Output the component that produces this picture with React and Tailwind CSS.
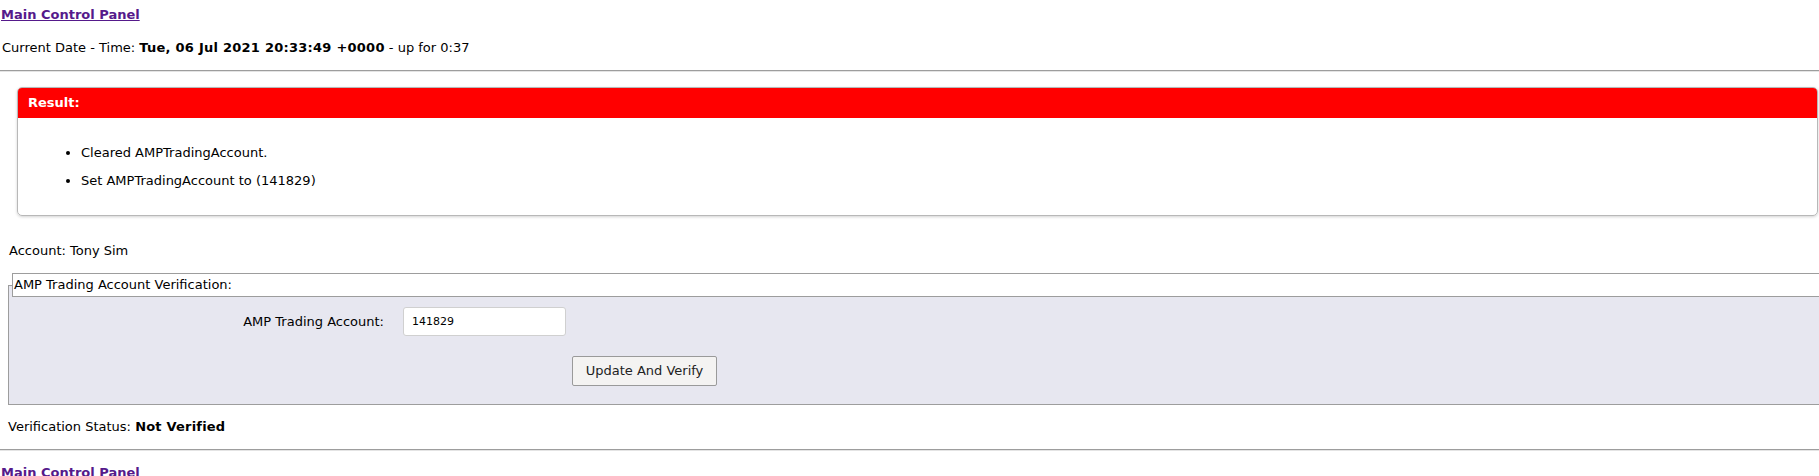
export default function App() {
    return (
        <div className="w-full overflow-hidden bg-white font-['DejaVu_Sans',sans-serif] text-[13px] leading-[16px] text-black">
            <div className="pt-[7px] pl-[1px]">
                <a href="#" className="font-bold text-[#551a8b] underline">Main Control Panel</a>
            </div>

            <div className="mt-[17px] pl-[2px]">
                Current Date - Time: <b className="tracking-[0.25px]">Tue, 06 Jul 2021 20:33:49 +0000</b> - up for 0:37
            </div>

            <div className="mt-[14px] border-t border-b border-t-[#9d9d9d] border-b-[#e4e4e4]" />

            <div className="mt-[15px] ml-[17px] mr-px rounded-[5px] border border-[#b8b8b8] shadow-[0_1px_3px_rgba(0,0,0,0.18)] overflow-hidden">
                <div className="flex h-[30px] items-center bg-[#ff0000] pl-[10px] font-bold text-white">Result:</div>
                <div className="pt-[27px] pb-[26px]">
                    <ul className="list-disc pl-[63px] space-y-[12px]">
                        <li>Cleared AMPTradingAccount.</li>
                        <li>Set AMPTradingAccount to (141829)</li>
                    </ul>
                </div>
            </div>

            <div className="mt-[27px] pl-[9px]">Account: Tony Sim</div>

            <div className="mt-[14px]">
                <div className="relative z-10 ml-[12px] flex h-[24px] items-center border border-r-0 border-[#9d9d9d] bg-white pl-[1px]">
                    AMP Trading Account Verification:
                </div>
                <div className="-mt-[12px] ml-[8px] border-t border-l border-b border-[#9d9d9d] bg-[#e7e7f0] pt-[21px] pb-[18px]">
                    <div className="flex items-center">
                        <div className="w-[375px] text-right">AMP Trading Account:</div>
                        <input
                            type="text"
                            defaultValue="141829"
                            className="ml-[19px] h-[29px] w-[163px] rounded-[3px] border border-[#d0d0d0] bg-white px-[8px] text-[11px] text-black outline-none"
                        />
                    </div>
                    <div className="mt-[20px] flex">
                        <button
                            type="button"
                            className="ml-[563px] h-[30px] w-[145px] rounded-[2px] border border-[#9a9a9a] bg-[#f4f3f2] text-[#222]"
                        >
                            Update And Verify
                        </button>
                    </div>
                </div>
            </div>

            <div className="mt-[14px] pl-[8px]">
                Verification Status: <b className="tracking-[0.2px]">Not Verified</b>
            </div>

            <div className="mt-[14px] border-t border-b border-t-[#9d9d9d] border-b-[#e4e4e4]" />

            <div className="mt-[14px] pl-[1px] pb-[10px]">
                <a href="#" className="font-bold text-[#551a8b] underline">Main Control Panel</a>
            </div>
        </div>
    );
}
